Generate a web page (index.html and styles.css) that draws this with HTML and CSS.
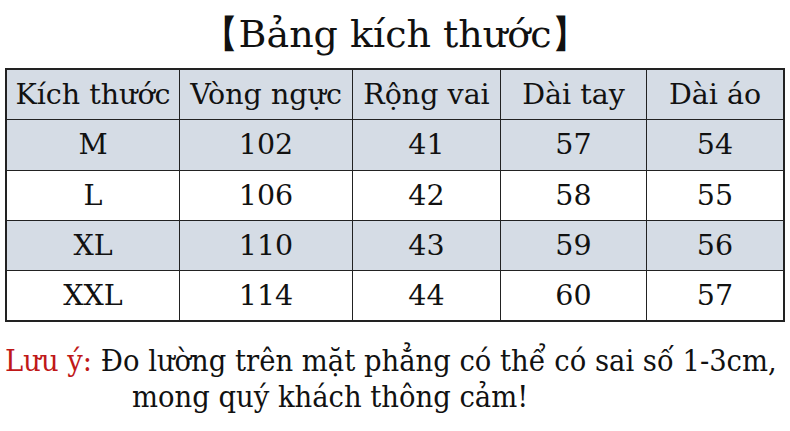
FILE: index.html
```html
<!DOCTYPE html>
<html lang="vi">
<head>
<meta charset="utf-8">
<link rel="stylesheet" href="styles.css">
</head>
<body>
<div class="page">
  <h1 class="title">【Bảng kích thước】</h1>
  <table class="size-table">
    <thead>
      <tr><th>Kích thước</th><th>Vòng ngực</th><th>Rộng vai</th><th>Dài tay</th><th>Dài áo</th></tr>
    </thead>
    <tbody>
      <tr class="shade"><td>M</td><td>102</td><td>41</td><td>57</td><td>54</td></tr>
      <tr><td>L</td><td>106</td><td>42</td><td>58</td><td>55</td></tr>
      <tr class="shade"><td>XL</td><td>110</td><td>43</td><td>59</td><td>56</td></tr>
      <tr><td>XXL</td><td>114</td><td>44</td><td>60</td><td>57</td></tr>
    </tbody>
  </table>
  <p class="note"><span class="note-label">Lưu ý:</span> Đo lường trên mặt phẳng có thể có sai số 1-3cm,<br><span class="indent">mong quý khách thông cảm!</span></p>
</div>
</body>
</html>
```
FILE: styles.css
```css
html, body {
  margin: 0;
  padding: 0;
  background: #ffffff;
}
.page {
  width: 790px;
  height: 431px;
  font-family: "DejaVu Serif", "Liberation Serif", serif;
  color: #111;
  overflow: hidden;
}
.title {
  margin: 0;
  padding-top: 12px;
  height: 68px;
  box-sizing: border-box;
  text-align: center;
  font-weight: normal;
  font-size: 38px;
  line-height: 44px;
}
.size-table {
  margin-left: 5px;
  width: 780px;
  border-collapse: collapse;
  border: 2px solid #222;
}
.size-table th,
.size-table td {
  border: 1.5px solid #222;
  height: 49.3px;
  padding: 0;
  text-align: center;
  font-weight: normal;
  font-size: 28.5px;
}
.size-table th:nth-child(1), .size-table td:nth-child(1) { width: 172px; }
.size-table th:nth-child(2), .size-table td:nth-child(2) { width: 172px; }
.size-table th:nth-child(3), .size-table td:nth-child(3) { width: 147px; }
.size-table th:nth-child(4), .size-table td:nth-child(4) { width: 145px; }
.size-table thead tr,
.size-table tr.shade {
  background: #d5dce5;
}
.note {
  margin: 21px 0 0 5px;
  font-family: "DejaVu Serif Condensed", "DejaVu Serif", serif;
  font-stretch: condensed;
  font-size: 30.5px;
  line-height: 36px;
}
.note-label {
  color: #c01818;
}
.indent {
  padding-left: 127px;
}
```
